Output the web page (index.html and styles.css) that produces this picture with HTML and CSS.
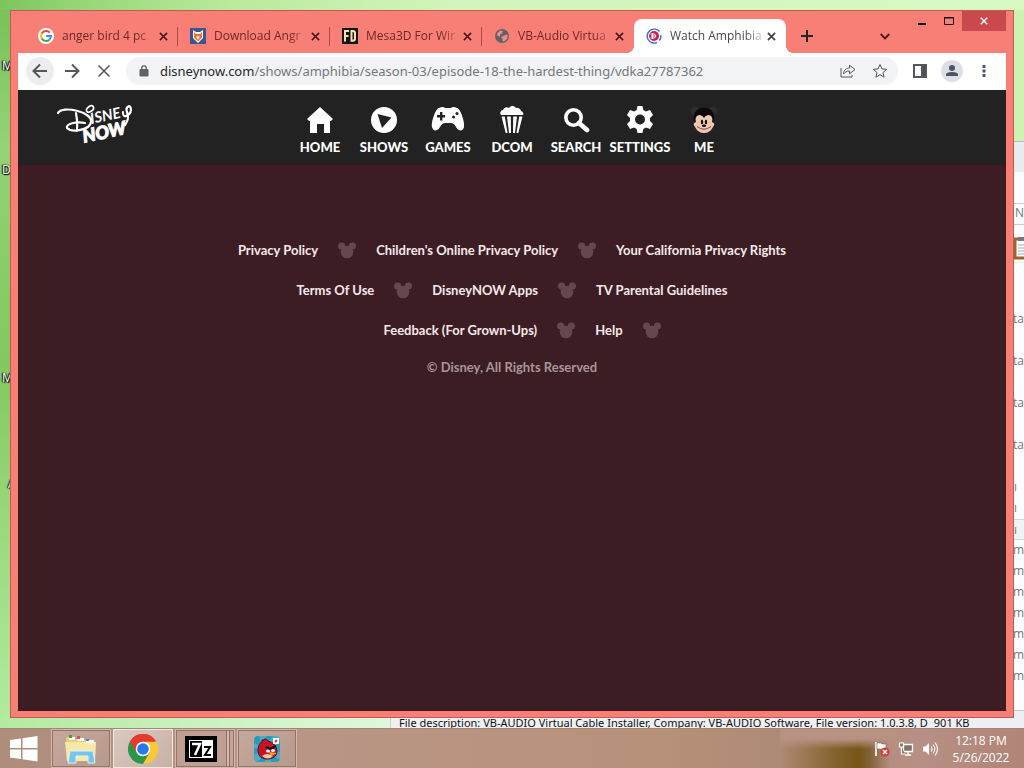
FILE: index.html
```html
<!DOCTYPE html>
<html lang="en">
<head>
<meta charset="utf-8">
<title>Watch Amphibia - DisneyNOW</title>
<link rel="stylesheet" href="styles.css">
</head>
<body>
<svg class="defs" aria-hidden="true">
  <symbol id="x" viewBox="0 0 10 10"><path d="M1 1l8 8M9 1l-8 8" fill="none" stroke="currentColor" stroke-width="1.8"/></symbol>
  <symbol id="mickey" viewBox="0 0 18 17"><circle cx="9" cy="10" r="6.300"/><circle cx="3.600" cy="4" r="3.600"/><circle cx="14.400" cy="4" r="3.600"/></symbol>
</svg>
<div class="desktop">
  <div class="workspace">
    <div class="shortcut s1">M</div>
    <div class="shortcut s2">D</div>
    <div class="shortcut s3">M</div>
    <div class="shortcut s4">A</div>

    <section class="explorer" aria-label="File explorer">
      <div class="ex-title"></div>
      <div class="ex-menu"></div>
      <div class="ex-address">N</div>
      <div class="ex-tools"><svg width="14" height="24" viewBox="0 0 14 24"><path d="M1 3h13v19H1z" fill="#fff" stroke="#9b6432" stroke-width="3"/><path d="M4 1h10v4H4z" fill="#777"/><path d="M4 9h10M4 12h10M4 15h10M4 18h10" stroke="#9ab"/></svg></div>
      <div class="ex-groups"><span>ta</span><span>ta</span><span>ta</span><span>ta</span></div>
      <div class="ex-rows"><span>ı</span><span>ı</span><span class="picked">ı</span><span>m</span><span>m</span><span>m</span><span>m</span><span>m</span><span>m</span><span>m</span></div>
      <div class="ex-status"><span>File description: VB-AUDIO Virtual Cable Installer, Company: VB-AUDIO Software, File version: 1.0.3.8, D</span><span>901 KB</span></div>
    </section>

    <section class="window" aria-label="Browser">
      <div class="titlebar">
        <div class="tabs">
          <div class="tab">
            <svg class="fav" viewBox="0 0 16 16"><circle cx="8" cy="8" r="8" fill="#fff"/><g fill="none" stroke-width="2"><path d="M11.800 4.600A5 5 0 0 0 3.700 5.500" stroke="#ea4335"/><path d="M3.700 5.500a5 5 0 0 0 0 5" stroke="#fbbc05"/><path d="M3.700 10.500a5 5 0 0 0 7.600 1.200" stroke="#34a853"/><path d="M11.300 11.700A5 5 0 0 0 13 8H8.200" stroke="#4285f4"/></g></svg>
            <span class="tab-name">anger bird 4 pc</span>
            <button class="tab-x" aria-label="Close tab"><svg><use href="#x"/></svg></button>
          </div>
          <div class="tab">
            <svg class="fav" viewBox="0 0 16 16"><path d="M0 0h16v16H0z" fill="#3d558c"/><path d="M3 2l3 2h4l3-2v8l-5 5-5-5z" fill="#fff"/><path d="M4 4l2 2h4l2-2v5.500l-4 4-4-4z" fill="#e8703a"/><path d="M6 8.500h4L8 12z" fill="#fff"/></svg>
            <span class="tab-name">Download Angr</span>
            <button class="tab-x" aria-label="Close tab"><svg><use href="#x"/></svg></button>
          </div>
          <div class="tab">
            <svg class="fav" viewBox="0 0 16 16"><path d="M0 0h16v16H0z" fill="#14141c"/><path d="M3 13.500V3h4M3 8h3.500M9.500 3v9.700h1.200q2.300 0 2.300-2.200V5.200Q13 3 10.700 3z" fill="none" stroke="#f7e6a0" stroke-width="2"/></svg>
            <span class="tab-name">Mesa3D For Wir</span>
            <button class="tab-x" aria-label="Close tab"><svg><use href="#x"/></svg></button>
          </div>
          <div class="tab">
            <svg class="fav" viewBox="0 0 16 16"><circle cx="8" cy="8" r="7" fill="#5f6368"/><path d="M3 5.500l3-3 3 .5-1 2.500-2 1v2L3.500 8zM9 8l3.500-1.500 1.500 1-1 3.500-3 2.500-1.500-.5V10.500L7 9.500z" fill="#f28b82"/></svg>
            <span class="tab-name">VB-Audio Virtua</span>
            <button class="tab-x" aria-label="Close tab"><svg><use href="#x"/></svg></button>
          </div>
          <div class="tab active">
            <svg class="fav" viewBox="0 0 16 16"><circle cx="8" cy="8" r="5" fill="#c9204f"/><path d="M13.500 3.500A7 7 0 1 0 11 14.500M14.800 7a7 7 0 0 1-1.500 5.500" fill="none" stroke="#3b6fd0" stroke-width="1.400"/><path d="M6.500 5v6M4.500 6h4q3 2 0 4h-4M5 8h4" fill="none" stroke="#fff"/></svg>
            <span class="tab-name">Watch Amphibia</span>
            <button class="tab-x" aria-label="Close tab"><svg><use href="#x"/></svg></button>
          </div>
        </div>
        <button class="strip-btn plus" aria-label="New tab"><svg width="12" height="12" viewBox="0 0 12 12"><path d="M6 0v12M0 6h12" stroke="#222" stroke-width="2"/></svg></button>
        <button class="strip-btn chevron" aria-label="Search tabs"><svg width="10" height="7" viewBox="0 0 10 7"><path d="M.7 1L5 5.400 9.300 1" fill="none" stroke="#4a1616" stroke-width="1.800"/></svg></button>
        <div class="controls">
          <button aria-label="Minimize"><svg width="10" height="10" viewBox="0 0 10 10"><path d="M1 8h8" stroke="#111" stroke-width="2"/></svg></button>
          <button aria-label="Maximize"><svg width="10" height="10" viewBox="0 0 10 10"><path d="M.5 1.500h9v7h-9zM0 2h10" fill="none" stroke="#111"/></svg></button>
          <button class="shut" aria-label="Close"><svg width="8" height="8" viewBox="0 0 10 10"><use href="#x"/></svg></button>
        </div>
      </div>

      <div class="toolbar">
        <button class="tool hover" aria-label="Back"><svg width="16" height="16" viewBox="0 0 16 16"><path d="M15 8H2M8 1.500L1.500 8 8 14.500"/></svg></button>
        <button class="tool" aria-label="Forward"><svg width="16" height="16" viewBox="0 0 16 16"><path d="M1 8h13M8 1.500L14.500 8 8 14.500"/></svg></button>
        <button class="tool" aria-label="Stop"><svg class="mid" width="14" height="14" viewBox="0 0 14 14"><path d="M1.500 1.500l11 11M12.500 1.500l-11 11"/></svg></button>
        <div class="omnibox">
          <svg width="10" height="12" viewBox="0 0 10 12"><path d="M1 4.500h8V11H1z" fill="#5f6368" stroke="#5f6368"/><path d="M2.800 4.500V3a2.200 2.200 0 0 1 4.400 0v1.500" fill="none" stroke="#5f6368" stroke-width="1.300"/></svg>
          <div class="url"><b>disneynow.com</b>/shows/amphibia/season-03/episode-18-the-hardest-thing/vdka27787362</div>
          <button class="tool" aria-label="Share"><svg class="thin" width="16" height="14" viewBox="0 0 16 14"><path d="M1 4v9h11v-2M3.500 10c0-4 3-6 6-6V1.200L15 5.500 9.500 9.800V7C7 7 5 8 3.500 10z"/></svg></button>
          <button class="tool" aria-label="Bookmark"><svg class="thin" width="16" height="16" viewBox="0 0 16 16"><path d="M8 1.500l1.900 4.400 4.700.4L11 9.500l1.100 4.700L8 11.700l-4.100 2.500L5 9.500 1.400 6.300l4.700-.4z"/></svg></button>
        </div>
        <button class="tool" aria-label="Side panel"><svg width="14" height="14" viewBox="0 0 14 14"><path d="M1 1h12v12H1z"/><path d="M9 1h4v12H9z" fill="#4b4f54"/></svg></button>
        <button class="tool" aria-label="Profile"><svg width="22" height="22" viewBox="0 0 22 22"><circle class="face-bg" cx="11" cy="11" r="11"/><circle class="face" cx="11" cy="8" r="3"/><path class="face" d="M5 16v-1.500q0-2.500 6-2.500t6 2.500V16z"/></svg></button>
        <button class="tool" aria-label="Menu"><svg width="4" height="14" viewBox="0 0 4 14"><path d="M.5 1h3v3h-3zM.5 5.500h3v3h-3zM.5 10h3v3h-3z" class="face"/></svg></button>
      </div>

      <header class="site-header">
        <a class="logo" href="#" aria-label="Disney NOW">
          <svg width="80" height="46" viewBox="0 0 80 46">
            <path d="M2 10C6 2 37 9 35 19c-1 8-19 11-24 6-2-4 10-7 18-5M20 10q2 9 1 18" fill="none" stroke="#fff" stroke-width="2.200" stroke-linecap="round"/>
            <ellipse cx="34" cy="6" rx="4" ry="2.500" transform="rotate(-35 34 6)" fill="none" stroke="#fff" stroke-width="1.700"/>
            <path d="M67 9c-1 7 7 4 8-2 0-7-6-3-4 2s1 9-2 13" fill="none" stroke="#fff" stroke-width="2.200" stroke-linecap="round"/>
            <g transform="rotate(-12 40 24)"><text class="logo-top" x="36" y="20">ISNE</text><text class="logo-now" x="25" y="37">NOW</text></g>
          </svg>
        </a>
        <nav>
          <a href="#"><svg width="28" height="28" viewBox="0 0 28 28"><path d="M14 1L27 13l-2 2h-1v12h-6v-9h-7v9H4V15H3l-2-2z"/></svg>HOME</a>
          <a href="#"><svg width="28" height="28" viewBox="0 0 28 28"><circle cx="14" cy="14" r="13"/><path class="cut" d="M7.500 8L21.500 11.500 12 22z"/></svg>SHOWS</a>
          <a href="#"><svg width="34" height="28" viewBox="0 0 34 28"><path d="M8 2q4-2 6 0h6q2-2 6 0c4 1 8 15 7 19-1 5-6 4-8 0q-2-4-5-4h-6q-3 0-5 4c-2 4-7 5-8 0C0 17 4 3 8 2z"/><path class="cut" d="M9 6h2.400v3H14v2.400h-2.600v3H9v-3H6V9h3z"/><circle class="cut" cx="22.500" cy="11" r="1.500"/><circle class="cut" cx="26" cy="7.500" r="1.500"/></svg>GAMES</a>
          <a href="#"><svg width="28" height="28" viewBox="0 0 28 28"><path d="M3 9a3 3 0 0 1 2-5 4 4 0 0 1 6-2 4 4 0 0 1 7 0 4 4 0 0 1 5 3 3 3 0 0 1 2 4zM3.500 10.500h3.300L9.500 27H7.700zM9 10.500h3.800L13 27h-2zM15.200 10.500H19L17 27h-2zM21.200 10.500h3.300L20.300 27h-1.800z"/></svg>DCOM</a>
          <a href="#"><svg width="28" height="28" viewBox="0 0 28 28"><circle cx="11.500" cy="11.500" r="7.700" fill="none" stroke="#fff" stroke-width="3.600"/><path d="M17 17l8 7" stroke="#fff" stroke-width="4.600" stroke-linecap="round"/></svg>SEARCH</a>
          <a href="#"><svg width="28" height="28" viewBox="0 0 28 28"><path d="M11.500 0h5l.8 4 2.700 1.400 4-1.300 3 4.900-3 3v3l3 3-3 4.900-4-1.300-2.700 1.500-.8 3.900h-5l-.8-3.900L8 21.600l-4 1.300L1 18l3-3v-3L1 9l3-4.900 4 1.300L10.700 4z"/><circle class="cut" cx="14" cy="13.500" r="5"/></svg>SETTINGS</a>
          <a href="#"><svg width="28" height="28" viewBox="0 0 28 28"><circle cx="5" cy="5" r="4.500" fill="#2f2c2e"/><circle cx="23" cy="5" r="4.500" fill="#2f2c2e"/><circle cx="14" cy="12" r="10.500" fill="#0d090a"/><path d="M14 12C10 6 4 10 6 16q-4 1-1 5 3 6 9 6t9-6q3-4-1-5c2-6-4-10-8-4z" fill="#edc8b5"/><ellipse cx="12" cy="16" rx="1.200" ry="2.600" fill="#111"/><ellipse cx="16" cy="16" rx="1.200" ry="2.600" fill="#111"/><ellipse cx="14" cy="19.700" rx="2.200" ry="1.300" fill="#111"/><path d="M7 20.500q7 5.500 14 0" fill="none" stroke="#8a4a42"/></svg>ME</a>
        </nav>
      </header>

      <main class="page">
        <footer>
          <div class="links">
            <a href="#">Privacy Policy</a><svg><use href="#mickey"/></svg><a href="#">Children's Online Privacy Policy</a><svg><use href="#mickey"/></svg><a href="#">Your California Privacy Rights</a>
          </div>
          <div class="links">
            <a href="#">Terms Of Use</a><svg><use href="#mickey"/></svg><a href="#">DisneyNOW Apps</a><svg><use href="#mickey"/></svg><a href="#">TV Parental Guidelines</a>
          </div>
          <div class="links last">
            <a href="#">Feedback (For Grown-Ups)</a><svg><use href="#mickey"/></svg><a href="#">Help</a><svg><use href="#mickey"/></svg>
          </div>
          <p>© Disney, All Rights Reserved</p>
        </footer>
      </main>
    </section>
  </div>

  <div class="taskbar">
    <button class="start" aria-label="Start"><svg width="28" height="26" viewBox="0 0 28 26"><path d="M0 4l11-1.600V12H0zM12.500 2.200L27.500 0v12h-15zM0 13.500h11V23L0 21.500zM12.500 13.500h15v12l-15-2.200z" fill="#fff"/></svg></button>
    <button class="task" aria-label="File Explorer"><svg width="34" height="30" viewBox="0 0 34 30"><path d="M2 3h8l2 3h18v20H3z" fill="#e9cf78"/><path d="M1 8h31l-1 19H3z" fill="#f8e8a6"/><path d="M5 3h6v3H5zM13 4h7v3h-7zM22 6h8v3h-8z" fill="#fff"/><path d="M5 1h3v3H5z" fill="#43a047"/><path d="M13 2h3v3h-3z" fill="#d9534f"/><path d="M22 5h3v2h-3z" fill="#3b8fd6"/><path d="M6 17h23l2 12h-7v-7H12v7H4z" fill="#79c4ee" stroke="#d9f2ff"/></svg></button>
    <button class="task current" aria-label="Chrome"><svg width="30" height="30" viewBox="0 0 30 30"><path d="M15 15L2 7.500A15 15 0 0 1 28 7.500z" fill="#e33b2e"/><path d="M15 15V7.500h13A15 15 0 0 1 15 30z" fill="#fcc934"/><path d="M15 15l6.500 3.800L15 30A15 15 0 0 1 2 7.500z" fill="#2a9748"/><path d="M15 7.500h13A15 15 0 0 0 2 7.500l6.500 11.300z" fill="#e33b2e"/><circle cx="15" cy="15" r="7.300" fill="#fff"/><circle cx="15" cy="15" r="5.800" fill="#2878e8"/></svg></button>
    <button class="task stacked" aria-label="7-Zip"><svg width="32" height="26" viewBox="0 0 32 26"><path d="M0 0h32v26H0z" fill="#000"/><path d="M4 4h24v18H4z" fill="#fff"/><path d="M5 5h12v16H5z" fill="#000"/><path d="M7 8h8l-5 11" fill="none" stroke="#fff" stroke-width="2.500"/><path d="M19 11h6l-5 8h6" fill="none" stroke="#000" stroke-width="2"/></svg></button>
    <button class="task" aria-label="Angry Birds"><svg width="26" height="28" viewBox="0 0 26 28"><rect y="1" width="26" height="26" rx="4" fill="#299bb8"/><path d="M0 8l8 3L5 1h7l1 8 6-8h7v6l-7 6 7 4v8l-9-5v7h-6v-7l-7 6H0v-6l7-5-7-2z" fill="#5fc4d6" opacity=".5"/><path d="M8 7q-1-3 2-2 1-3 4 1 8 2 9 10c0 6-5 8-10 8s-9-3-9-8 1-7 4-9z" fill="#c81226" stroke="#51111a"/><path d="M8 21q5-4 11 0-5 5-11 0z" fill="#e8c7a5"/><path d="M12 12l4 2 6-3" fill="none" stroke="#111" stroke-width="2"/><ellipse cx="14" cy="16" rx="2" ry="1.600" fill="#fff"/><ellipse cx="19" cy="15.500" rx="2" ry="1.600" fill="#fff"/><path d="M15 17l8 1-6 3z" fill="#f2ac22"/><path d="M19 3h6v6h-6z" fill="#fff"/><path d="M21 7l2-2" stroke="#d33" stroke-width="2"/></svg></button>
    <div class="tray">
      <svg width="16" height="16" viewBox="0 0 16 16"><path d="M2 1v14" stroke="#fff" stroke-width="1.600"/><path d="M3 2h4l1 1h4v6H8L7 8H3z" fill="#fff" stroke="#6b5448" stroke-width=".5"/><circle cx="11" cy="11" r="4.500" fill="#d63c3c"/><path d="M9 9l4 4M13 9l-4 4" stroke="#fff" stroke-width="1.500"/></svg>
      <svg width="16" height="16" viewBox="0 0 16 16"><path d="M5.500 3.500h9v7h-9zM10 10.500v3M7 14h6" fill="#857064" stroke="#fff" stroke-width="1.300"/><path d="M1.500 2h4v4h-4zM3.500 6v7H7" fill="#857064" stroke="#fff" stroke-width="1.200"/></svg>
      <svg width="16" height="16" viewBox="0 0 16 16"><path d="M1 5.500h2.500L7 2v12l-3.500-3.500H1z" fill="#fff"/><path d="M9 5.500q2 2.500 0 5M11 3.500q3.500 4.500 0 9M13 1.500q5 6.500 0 13" fill="none" stroke="#fff" stroke-width="1.100"/></svg>
    </div>
    <div class="clock"><span>12:18 PM</span><span>5/26/2022</span></div>
  </div>
</div>
</body>
</html>
```

FILE: styles.css
```css
* { box-sizing: border-box; }
body { margin: 0; font-family: "Open Sans", "Noto Sans", sans-serif; font-size: 12px; }
button { border: 0; padding: 0; background: none; font: inherit; color: inherit; display: flex; align-items: center; justify-content: center; flex: none; }
a { text-decoration: none; }
svg { flex: none; display: block; }
.defs { position: absolute; width: 0; height: 0; }

.desktop { display: flex; flex-direction: column; height: 100vh; overflow: hidden; }
.workspace {
  flex: 1; position: relative; min-height: 0; overflow: hidden;
  background:
    linear-gradient(90deg, #7cc45e 0, #97d677 8%, #b9ea9b 22%, #d2f5bd 45%, #d6f8c2 100%) top / 100% 10px no-repeat,
    linear-gradient(90deg, #b4eaa0, #e2f8e0 40%) bottom / 100% 12px no-repeat,
    linear-gradient(90deg, transparent 50%, #cdf2b2 50%),
    linear-gradient(180deg, #78c158, #94d274 20%, #82c85f 50%, #a0d980 75%, #b4eaa0);
}
.shortcut { position: absolute; left: 2px; color: #fff; line-height: 16px; text-shadow: 1px 1px 1px #000, -1px 0 1px #000, 0 0 2px #000; }
.s1 { top: 58px; }
.s2 { top: 162px; }
.s3 { top: 370px; }
.s4 { top: 476px; left: 8px; }

.explorer { position: absolute; left: 390px; right: 0; top: 141px; bottom: 0; display: flex; flex-direction: column; background: #fdfefe; border-left: 1px solid #c8d4c8; color: #777; line-height: 20px; text-align: right; }
.ex-title { height: 31px; background: #ececef; border-top: 1px solid #bbb; }
.ex-menu { height: 32px; border-bottom: 1px solid #ccc; }
.ex-address { height: 22px; border-bottom: 1px solid #ccc; margin-top: -1px; }
.ex-tools { height: 38px; display: flex; justify-content: flex-end; align-items: center; padding-top: 8px; border-bottom: 1px solid #eee; overflow: hidden; }
.ex-tools svg { margin-right: -4px; }
.ex-groups { display: grid; grid-auto-rows: 42px; padding-top: 46px; }
.ex-rows { display: grid; grid-auto-rows: 21px; }
.ex-rows span:nth-child(-n+3) { padding-right: 7px; }
.picked { background: #eff5f7; border: solid #cdd6da; border-width: 1px 0; }
.ex-status { margin-top: auto; display: flex; gap: 6px; height: 18px; padding: 4px 0 0 8px; background: #eff0f3; border-top: 1px solid #ccc; color: #111; font: 11px/16px "Noto Sans", sans-serif; white-space: nowrap; }

.window { position: absolute; inset: 10px 10px 10px 10px; display: flex; flex-direction: column; background: #f87f76; border: 1px solid #bf5b52; padding: 0 7px 6px; }
.titlebar { display: flex; height: 42px; align-items: flex-end; padding-left: 8px; }
.tabs { display: flex; height: 34px; min-width: 0; }
.tab { position: relative; display: flex; align-items: center; width: 152px; gap: 8px; padding: 0 10px 0 12px; color: #6b2a25; }
.tab:not(.active):not(:nth-child(4))::after { content: ""; position: absolute; right: 0; top: 8px; width: 1px; height: 19px; background: #a94e46; }
.active { background: #fff; color: #46494d; border-radius: 8px 8px 0 0; }
.active::before, .active::after { content: ""; position: absolute; bottom: 0; width: 8px; height: 8px; }
.active::before { left: -8px; background: radial-gradient(circle at 0 0, transparent 8px, #fff 8px); }
.active::after { right: -8px; background: radial-gradient(circle at 100% 0, transparent 8px, #fff 8px); }
.fav { width: 16px; height: 16px; }
.tab-name { flex: 1; min-width: 0; margin-right: -5px; white-space: nowrap; line-height: 18px; -webkit-mask-image: linear-gradient(90deg, #000 80%, rgba(0, 0, 0, .2)); mask-image: linear-gradient(90deg, #000 80%, rgba(0, 0, 0, .2)); }
.tab-x { width: 10px; height: 16px; color: #4a1616; }
.active .tab-x { color: #3c4043; }
.tab-x svg { width: 9px; height: 9px; }
.strip-btn { width: 28px; height: 34px; }
.plus { margin-left: 7px; }
.chevron { margin: 0 9px 0 auto; }
.controls { display: flex; align-self: flex-start; }
.controls button { width: 27px; height: 20px; }
.controls .shut { width: 44px; background: #c9494c; color: #fff; }

.toolbar { display: flex; align-items: center; gap: 4px; height: 37px; padding: 0 8px 2px; background: #fff; }
.tool { width: 28px; height: 28px; border-radius: 14px; }
.tool svg { fill: none; stroke: #54585c; stroke-width: 2; }
.tool .thin { stroke-width: 1; }
.tool .mid { stroke-width: 1.5; }
.hover { background: #ededef; }
.tool .face { fill: #4d5563; stroke: none; }
.tool .face-bg { fill: #dcdfe6; stroke: none; }
.omnibox { display: flex; flex: 1; align-items: center; gap: 4px; height: 28px; min-width: 0; margin: 0 4px; padding: 0 4px 0 13px; border-radius: 14px; background: #f1f3f4; color: #74787c; font: 13px/20px "Noto Sans", sans-serif; }
.url { flex: 1; min-width: 0; overflow: hidden; white-space: nowrap; padding-left: 7px; }
.url b { color: #25282b; font-weight: 400; }

.site-header { display: grid; grid-template-columns: 1fr auto 1fr; height: 75px; background: #222; flex: none; }
.logo { padding: 13px 0 0 38px; }
.logo-top { font: italic 700 15px "Lato", sans-serif; fill: #fff; }
.logo-now { font: italic 900 18px "Lato", sans-serif; fill: #fff; stroke: #fff; }
nav { display: flex; padding-top: 16px; }
nav a { display: flex; flex-direction: column; align-items: center; gap: 5px; width: 64px; color: #fff; font: 900 13px/16px "Lato", sans-serif; white-space: nowrap; }
nav svg { fill: #fff; }
nav .cut { fill: #222; }

.page { flex: 1; min-height: 0; background: #3d1d24; border-bottom: 1px solid #4c1518; box-shadow: inset 0 4px 4px -3px #4a1518; }
footer { display: flex; flex-direction: column; align-items: center; padding-top: 75px; font: 700 13px/20px "Lato", sans-serif; }
.links { display: flex; align-items: center; gap: 20px; height: 20px; margin-bottom: 20px; }
.links a { color: #f5e9eb; }
.links svg { width: 18px; height: 17px; fill: #65484e; }
.last { padding-left: 20px; }
footer p { margin: -3px 0 0; color: #a8959a; }

.taskbar { flex: none; display: flex; height: 40px; border-top: 1px solid #a38577; background: linear-gradient(180deg, #b79181 30%, transparent 50%) 780px 0 / 110px 40px no-repeat, linear-gradient(90deg, #a78669 780px, #8f6d3c 830px, #765515 860px, #7d5d28 868px, transparent 890px) 0 0 / 890px 100% no-repeat, linear-gradient(90deg, #ae8d7c, #b99586 30%, #b79179 65%, #ad8a74 76%, #b78f84 90%, #b18577); background: linear-gradient(180deg, #b79181 25%, transparent 50%) 780px 0 / 120px 40px no-repeat, linear-gradient(90deg, transparent, #8c6a3b 40%, #765515 72%, #83633a 82%, transparent) 780px 0 / 110px 40px no-repeat, linear-gradient(90deg, #ae8d7c, #b99586 30%, #b79179 65%, #ad8a74 76%, #b78f84 90%, #b18577); }
.start { width: 48px; margin-right: 3px; }
.task { width: 60px; margin-right: 2px; border: 1px solid #d1b9ad; background: linear-gradient(135deg, #c4a99c, #b8998b); outline: 1px solid #937568; outline-offset: -2px; }
.task.current { border: 1px solid #f4e9df; background: linear-gradient(135deg, #d9c9c0, #c8b0a4); outline: 0; }
.task.stacked { padding-right: 8px; background: linear-gradient(90deg, transparent 50px, #8f7164 50px 51px, #d1b9ad 51px 53px, #8f7164 53px 54px, #c4a497 54px), #bf9f92; }
.tray { display: flex; align-items: center; gap: 8px; margin-left: auto; }
.clock { display: flex; flex-direction: column; align-items: center; justify-content: center; width: 86px; color: #fff; line-height: 17px; }
```
